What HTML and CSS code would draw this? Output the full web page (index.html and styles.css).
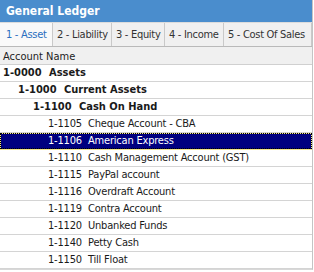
FILE: index.html
```html
<!DOCTYPE html>
<html lang="en">
<head>
    <meta charset="UTF-8">
    <title>General Ledger</title>
    <link rel="stylesheet" href="styles.css">
</head>
<body>

<div class="ledger">
    <div class="title">General Ledger</div>

    <div class="tabs">
        <div class="tab active t1">1 - Asset</div>
        <div class="tab t2">2 - Liability</div>
        <div class="tab t3">3 - Equity</div>
        <div class="tab t4">4 - Income</div>
        <div class="tab t5">5 - Cost Of Sales</div>
    </div>

    <div class="colhead">Account Name</div>

    <div class="rows">
        <div class="row bold lvl0"><span class="num">1-0000</span><span>Assets</span></div>
        <div class="row bold lvl1"><span class="num">1-1000</span><span>Current Assets</span></div>
        <div class="row bold lvl2"><span class="num">1-1100</span><span>Cash On Hand</span></div>
        <div class="row lvl3"><span class="num">1-1105</span><span>Cheque Account - CBA</span></div>
        <div class="row lvl3 selected"><span class="num">1-1106</span><span>American Express</span></div>
        <div class="row lvl3"><span class="num">1-1110</span><span>Cash Management Account (GST)</span></div>
        <div class="row lvl3"><span class="num">1-1115</span><span>PayPal account</span></div>
        <div class="row lvl3"><span class="num">1-1116</span><span>Overdraft Account</span></div>
        <div class="row lvl3"><span class="num">1-1119</span><span>Contra Account</span></div>
        <div class="row lvl3"><span class="num">1-1120</span><span>Unbanked Funds</span></div>
        <div class="row lvl3"><span class="num">1-1140</span><span>Petty Cash</span></div>
        <div class="row lvl3"><span class="num">1-1150</span><span>Till Float</span></div>
    </div>
</div>

</body>
</html>
```

FILE: styles.css
```css
body {
    margin: 0;
    background: #ffffff;
    font-family: "DejaVu Sans Condensed", "DejaVu Sans", sans-serif;
    font-size: 11px;
    color: #1a1a1a;
}
.ledger {
    width: 312px;
    border-right: 1px solid #c4c4c4;
    border-bottom: 1px solid #d8d8d8;
}
.title {
    height: 22px;
    line-height: 22px;
    background-color: #4a8dcd;
    color: #fff;
    font-weight: bold;
    font-size: 12px;
    padding-left: 6px;
}
.tabs {
    display: flex;
    height: 23px;
    background-color: #f0f0f0;
    border-top: 1px solid #dcdcdc;
    border-bottom: 1px solid #b9b9b9;
}
.tab {
    box-sizing: border-box;
    border-right: 1px solid #c9c9c9;
    line-height: 24px;
    color: #333;
    padding-left: 4px;
    letter-spacing: -0.3px;
    white-space: nowrap;
    overflow: hidden;
}
.tab.active {
    background-color: #f9f9f9;
    color: #2a6fc0;
    padding-left: 6px;
}
.t1 { width: 53px; }
.t2 { width: 59px; }
.t3 { width: 53px; }
.t4 { width: 59px; }
.t5 { width: 88px; }
.colhead {
    height: 17px;
    line-height: 19px;
    background-color: #f0f0f0;
    padding-left: 3px;
    border-bottom: 1px solid #d0d0d0;
    color: #222;
}
.row {
    display: flex;
    height: 16px;
    line-height: 16px;
    border-bottom: 1px solid #d4d4d4;
    white-space: nowrap;
    letter-spacing: -0.2px;
    position: relative;
}
.row .num {
    display: inline-block;
    width: 40px;
}
.bold {
    font-weight: bold;
    letter-spacing: 0;
}
.bold .num {
    width: 46px;
}
.lvl0 { padding-left: 3px; }
.lvl1 { padding-left: 18px; }
.lvl2 { padding-left: 33px; }
.lvl3 { padding-left: 48px; }
.row.selected {
    background-color: #000080;
    color: #fff;
    outline: 1px solid #f2e58a;
    outline-offset: -1px;
}
.row.selected::after {
    content: "";
    position: absolute;
    top: 0;
    left: 0;
    right: 0;
    bottom: 0;
    border: 1px dotted #000;
}
```
